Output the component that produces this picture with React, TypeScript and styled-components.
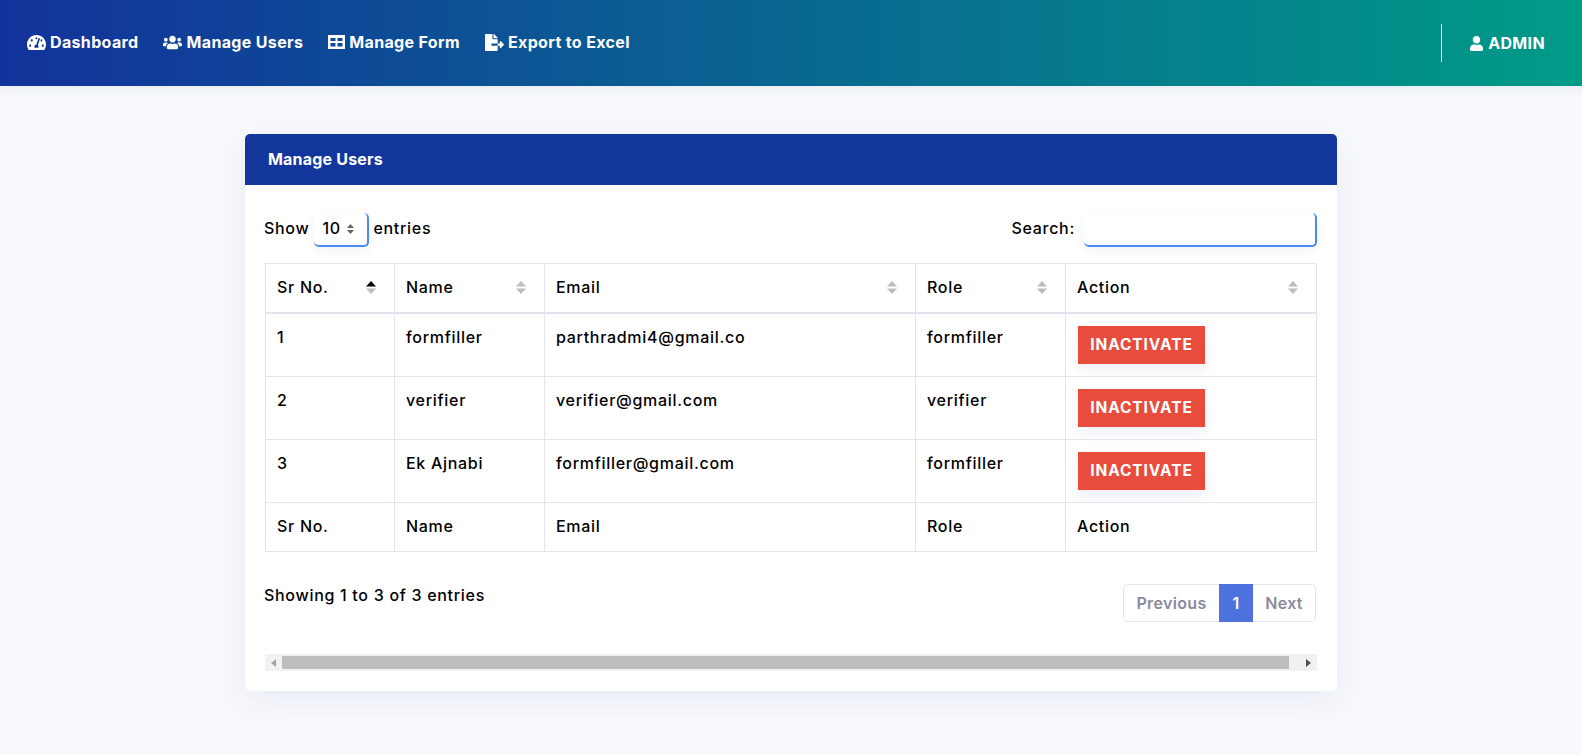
import React from "react";
import styled, { createGlobalStyle } from "styled-components";
import { FaFileExport, FaTachometerAlt, FaUser, FaUsers } from "react-icons/fa";

const GlobalStyle = createGlobalStyle`
  html, body {
    margin: 0;
    padding: 0;
    background: #f7f9fd;
    font-family: "Inter", "Liberation Sans", sans-serif;
    color: #000;
  }
`;

const Page = styled.div`
  height: 755px;
  overflow: hidden;
`;

const TopBar = styled.header`
  height: 86px;
  display: flex;
  align-items: center;
  justify-content: space-between;
  padding: 0 37px 0 27px;
  background: linear-gradient(90deg, #12329b 0%, #009b87 100%);
  box-shadow: 0 2px 12px rgba(30, 40, 90, 0.08);
  box-sizing: border-box;
`;

const NavList = styled.nav`
  display: flex;
  align-items: center;
  gap: 25px;
  padding-bottom: 2px;
`;

const NavLink = styled.a`
  display: flex;
  align-items: center;
  gap: 4px;
  color: #fff;
  font-size: 16px;
  font-weight: 700;
  letter-spacing: 0.35px;
  svg {
    font-size: 19px;
  }
`;

const AdminLink = styled(NavLink)`
  svg {
    font-size: 15px;
  }
`;

const AdminArea = styled.div`
  display: flex;
  align-items: center;
  height: 38px;
  border-left: 1px solid #fff;
  padding-left: 27px;
`;

const Main = styled.main`
  display: flex;
  justify-content: center;
  padding-top: 48px;
`;

const Card = styled.section`
  width: 1092px;
  background: #fff;
  border-radius: 5px;
  box-shadow: 0 10px 30px rgba(40, 50, 110, 0.07);
  overflow: hidden;
`;

const CardHeader = styled.h2`
  margin: 0;
  height: 51px;
  display: flex;
  align-items: center;
  padding: 0 0 2px 23px;
  box-sizing: border-box;
  background: #12369c;
  color: #fff;
  font-size: 16px;
  font-weight: 700;
  letter-spacing: 0.2px;
`;

const CardBody = styled.div`
  padding: 28px 20px 20px 19px;
`;

const Toolbar = styled.div`
  display: flex;
  justify-content: space-between;
  align-items: flex-start;
  margin-bottom: 16px;
`;

const Label = styled.label`
  display: flex;
  align-items: flex-start;
  font-size: 16px;
  font-weight: 500;
  letter-spacing: 0.7px;
  line-height: 30px;
`;

const PageSize = styled.div`
  width: 55px;
  height: 34px;
  margin: 0 4px 0 5px;
  padding-left: 8px;
  display: flex;
  align-items: flex-start;
  gap: 6px;
  box-sizing: border-box;
  border-right: 2px solid #4a8af4;
  border-bottom: 2px solid #4a8af4;
  border-radius: 5px;
  box-shadow: 0 4px 12px rgba(40, 50, 110, 0.06);
  svg {
    margin-top: 11px;
  }
`;

const SearchInput = styled.input`
  width: 233px;
  height: 34px;
  margin-left: 9px;
  padding: 0 8px;
  box-sizing: border-box;
  border: 0;
  border-right: 2px solid #4a8af4;
  border-bottom: 2px solid #4a8af4;
  border-radius: 5px;
  outline: none;
  box-shadow: 0 4px 12px rgba(40, 50, 110, 0.06);
`;

const Table = styled.table`
  width: 1051px;
  margin-left: 1px;
  table-layout: fixed;
  border-collapse: collapse;
  font-size: 16px;
  font-weight: 500;
  letter-spacing: 0.7px;
`;

const Col = styled.col<{ $width: number }>`
  width: ${(p) => p.$width}px;
`;

const HeadCell = styled.th`
  height: 46px;
  padding: 0 11px 2px;
  text-align: left;
  font-weight: 500;
  border: 1px solid #e3e4f0;
  border-bottom-width: 2px;
`;

const HeadInner = styled.div`
  display: flex;
  align-items: center;
  justify-content: space-between;
  padding-right: 7px;
`;

const BodyCell = styled.td`
  height: 38px;
  padding: 12px 11px;
  vertical-align: top;
  line-height: 22px;
  border: 1px solid #e3e4f0;
`;

const FootCell = styled.td`
  height: 46px;
  padding: 0 11px 2px;
  border: 1px solid #e3e4f0;
`;

const DangerButton = styled.button`
  display: block;
  width: 127px;
  height: 38px;
  margin-left: 1px;
  padding: 0 0 2px;
  border: 0;
  background: #e84c3d;
  color: #fff;
  font-family: inherit;
  font-size: 15.5px;
  font-weight: 700;
  letter-spacing: 0.9px;
  box-shadow: 0 6px 14px rgba(40, 50, 110, 0.08);
`;

const Footer = styled.div`
  display: flex;
  justify-content: space-between;
  align-items: flex-start;
  padding-top: 32px;
`;

const Info = styled.div`
  font-size: 16px;
  font-weight: 500;
  letter-spacing: 0.7px;
  line-height: 22px;
`;

const Pager = styled.div`
  display: flex;
  height: 38px;
  margin-right: 1px;
  box-sizing: border-box;
  border: 1px solid #e3e4f0;
  border-radius: 5px;
  font-size: 16px;
  font-weight: 600;
  letter-spacing: 0.35px;
`;

const PageLink = styled.span<{ $active?: boolean; $width: number }>`
  width: ${(p) => p.$width}px;
  display: flex;
  align-items: center;
  justify-content: center;
  color: ${(p) => (p.$active ? "#fff" : "#8a8a9e")};
  background: ${(p) => (p.$active ? "#4d72de" : "transparent")};
  margin: ${(p) => (p.$active ? "-1px 0" : "0")};
`;

const ScrollBar = styled.div`
  display: flex;
  align-items: center;
  height: 17px;
  width: 1052px;
  margin: 32px 0 0 1px;
  background: #f1f1f1;
`;

const ScrollArrow = styled.div`
  width: 17px;
  display: flex;
  justify-content: center;
`;

const ScrollTrack = styled.div`
  flex: 1;
  display: flex;
  padding-right: 11px;
`;

const ScrollThumb = styled.div`
  flex: 1;
  height: 13px;
  background: #bdbdbd;
`;

const SortIcon = ({ up = "#bdbdbd", down = "#bdbdbd" }: { up?: string; down?: string }) => (
  <svg width="10" height="13" viewBox="0 0 10 13">
    <path d="M5 0 L10 5.5 H0 Z" fill={up} />
    <path d="M5 13 L10 7.5 H0 Z" fill={down} />
  </svg>
);

const FormIcon = () => (
  <svg width="17" height="16" viewBox="0 0 17 16" fill="#fff">
    <path
      fillRule="evenodd"
      d="M0 1 H17 V15 H0 Z M2.5 4 V7 H7.5 V4 Z M9.5 4 V7 H14.5 V4 Z M2.5 9 V12.5 H7.5 V9 Z M9.5 9 V12.5 H14.5 V9 Z"
    />
  </svg>
);

const columns = ["Sr No.", "Name", "Email", "Role", "Action"];
const widths = [129, 150, 371, 150, 251];

const users = [
  { id: 1, name: "formfiller", email: "parthradmi4@gmail.co", role: "formfiller" },
  { id: 2, name: "verifier", email: "verifier@gmail.com", role: "verifier" },
  { id: 3, name: "Ek Ajnabi", email: "formfiller@gmail.com", role: "formfiller" },
];

const App: React.FC = () => (
  <Page>
    <GlobalStyle />
    <TopBar>
      <NavList>
        <NavLink><FaTachometerAlt /> Dashboard</NavLink>
        <NavLink><FaUsers /> Manage Users</NavLink>
        <NavLink><FormIcon /> Manage Form</NavLink>
        <NavLink><FaFileExport /> Export to Excel</NavLink>
      </NavList>
      <AdminArea>
        <AdminLink><FaUser /> ADMIN</AdminLink>
      </AdminArea>
    </TopBar>
    <Main>
      <Card>
        <CardHeader>Manage Users</CardHeader>
        <CardBody>
          <Toolbar>
            <Label>
              Show
              <PageSize>
                10
                <svg width="7" height="10" viewBox="0 0 7 10">
                  <path d="M3.5 0 L7 4 H0 Z M3.5 10 L7 6 H0 Z" fill="#666" />
                </svg>
              </PageSize>
              entries
            </Label>
            <Label>
              Search:
              <SearchInput />
            </Label>
          </Toolbar>
          <Table>
            <colgroup>
              {widths.map((w, i) => (
                <Col key={i} $width={w} />
              ))}
            </colgroup>
            <thead>
              <tr>
                {columns.map((c, i) => (
                  <HeadCell key={c}>
                    <HeadInner>
                      {c}
                      {i === 0 ? <SortIcon up="#000" /> : <SortIcon />}
                    </HeadInner>
                  </HeadCell>
                ))}
              </tr>
            </thead>
            <tbody>
              {users.map((u) => (
                <tr key={u.id}>
                  <BodyCell>{u.id}</BodyCell>
                  <BodyCell>{u.name}</BodyCell>
                  <BodyCell>{u.email}</BodyCell>
                  <BodyCell>{u.role}</BodyCell>
                  <BodyCell>
                    <DangerButton>INACTIVATE</DangerButton>
                  </BodyCell>
                </tr>
              ))}
            </tbody>
            <tfoot>
              <tr>
                {columns.map((c) => (
                  <FootCell key={c}>{c}</FootCell>
                ))}
              </tr>
            </tfoot>
          </Table>
          <Footer>
            <Info>Showing 1 to 3 of 3 entries</Info>
            <Pager>
              <PageLink $width={95}>Previous</PageLink>
              <PageLink $active $width={34}>1</PageLink>
              <PageLink $width={62}>Next</PageLink>
            </Pager>
          </Footer>
          <ScrollBar>
            <ScrollArrow>
              <svg width="5" height="8" viewBox="0 0 5 8"><path d="M5 0 V8 L0 4 Z" fill="#a3a3a3" /></svg>
            </ScrollArrow>
            <ScrollTrack>
              <ScrollThumb />
            </ScrollTrack>
            <ScrollArrow>
              <svg width="5" height="8" viewBox="0 0 5 8"><path d="M0 0 V8 L5 4 Z" fill="#505050" /></svg>
            </ScrollArrow>
          </ScrollBar>
        </CardBody>
      </Card>
    </Main>
  </Page>
);

export default App;
